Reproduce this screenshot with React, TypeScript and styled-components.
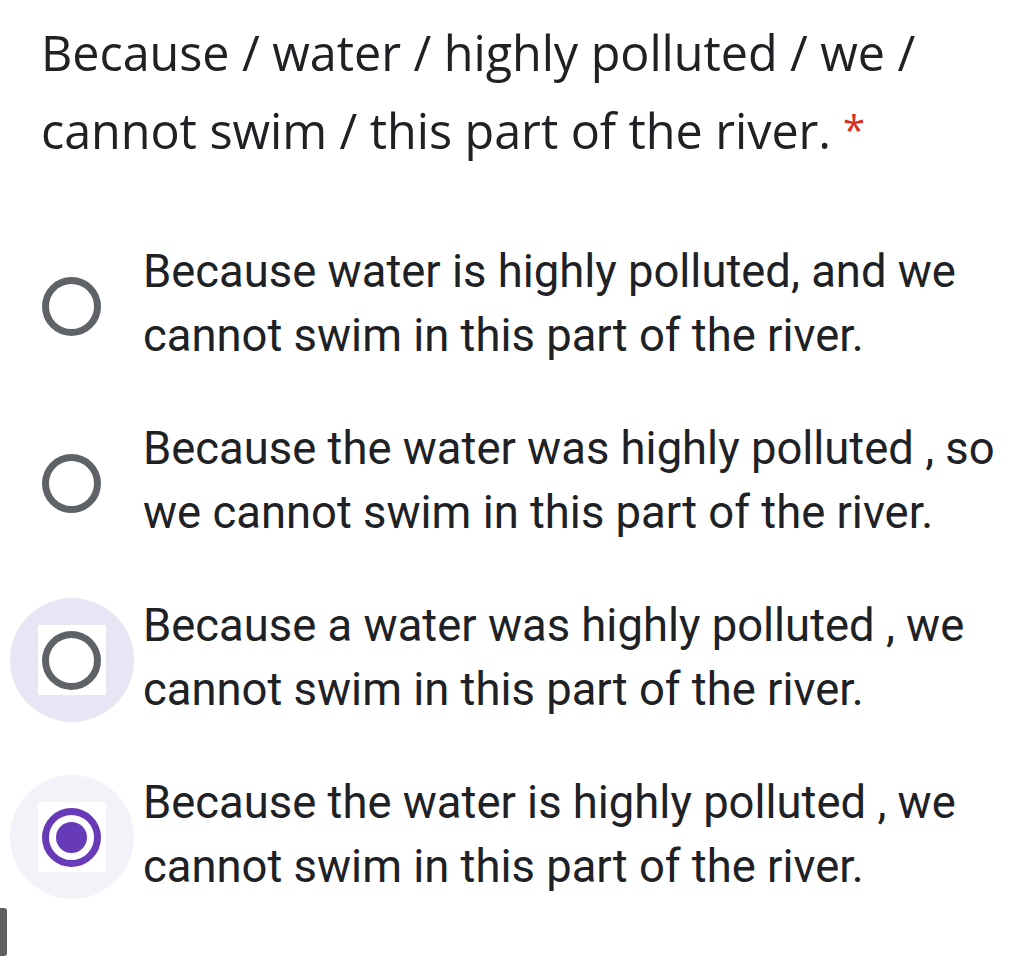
import { FC } from 'react';
import styled, { createGlobalStyle } from 'styled-components';

const GlobalStyle = createGlobalStyle`
  body {
    margin: 0;
    background: #ffffff;
    font-family: Roboto, "Liberation Sans", sans-serif;
    color: #202124;
  }
`

const Page = styled.div`
  position: relative;
  width: 1024px;
  height: 964px;
  overflow: hidden;
  background: #fff;
`

const Title = styled.div`
  padding: 13px 0 0 41px;
  font-family: "Open Sans", Roboto, sans-serif;
  font-size: 48.5px;
  line-height: 78px;
  letter-spacing: -0.05px;
  color: #202124;
  white-space: nowrap;
`

const Required = styled.span`
  color: #d93025;
  margin-left: 12px;
  font-size: 40px;
  vertical-align: 4px;
`

const Options = styled.div`
  margin-top: 71px;
  display: flex;
  flex-direction: column;
  gap: 49px;
`

const Option = styled.div`
  display: flex;
  align-items: center;
`

const RadioCell = styled.div`
  width: 143px;
  height: 128px;
  display: flex;
  align-items: center;
  justify-content: center;
  flex-shrink: 0;
`

const Halo = styled.div<{ $shade?: string }>`
  width: 124px;
  height: 124px;
  border-radius: 50%;
  background: ${p => p.$shade || 'transparent'};
  display: flex;
  align-items: center;
  justify-content: center;
  margin-top: 4px;
`

const Square = styled.div<{ $show?: boolean }>`
  width: 68px;
  height: 70px;
  background: ${p => (p.$show ? '#fff' : 'transparent')};
  display: flex;
  align-items: center;
  justify-content: center;
`

const Ring = styled.div<{ $checked?: boolean }>`
  box-sizing: border-box;
  width: 59px;
  height: 59px;
  border-radius: 50%;
  border: 7px solid ${p => (p.$checked ? '#673ab7' : '#5f6368')};
  display: flex;
  align-items: center;
  justify-content: center;
`

const Dot = styled.div`
  width: 31px;
  height: 31px;
  border-radius: 50%;
  background: #673ab7;
`

const Label = styled.div`
  font-size: 45.4px;
  line-height: 64px;
  color: #202124;
  white-space: nowrap;
`

const SideBar = styled.div`
  position: absolute;
  left: 0;
  top: 908px;
  width: 7px;
  height: 48px;
  border-radius: 0 3px 3px 0;
  background: #5f5f5f;
`

type Item = { lines: [string, string]; shade?: string; square?: boolean; checked?: boolean };

const items: Item[] = [
  { lines: ['Because water is highly polluted, and we', 'cannot swim in this part of the river.'] },
  { lines: ['Because the water was highly polluted , so', 'we cannot swim in this part of the river.'] },
  { lines: ['Because a water was highly polluted , we', 'cannot swim in this part of the river.'], shade: '#e9e5f5', square: true },
  { lines: ['Because the water is highly polluted , we', 'cannot swim in this part of the river.'], shade: '#f4f2f9', square: true, checked: true },
];

export const App: FC = () => {
  return (
    <Page>
      <GlobalStyle />
      <Title>
        Because / water / highly polluted / we /<br />
        cannot swim / this part of the river.<Required>*</Required>
      </Title>
      <Options>
        {items.map((it, i) => (
          <Option key={i}>
            <RadioCell>
              <Halo $shade={it.shade}>
                <Square $show={it.square}>
                  <Ring $checked={it.checked}>{it.checked && <Dot />}</Ring>
                </Square>
              </Halo>
            </RadioCell>
            <Label>
              {it.lines[0]}<br />
              {it.lines[1]}
            </Label>
          </Option>
        ))}
      </Options>
      <SideBar />
    </Page>
  )
}

export default App;
